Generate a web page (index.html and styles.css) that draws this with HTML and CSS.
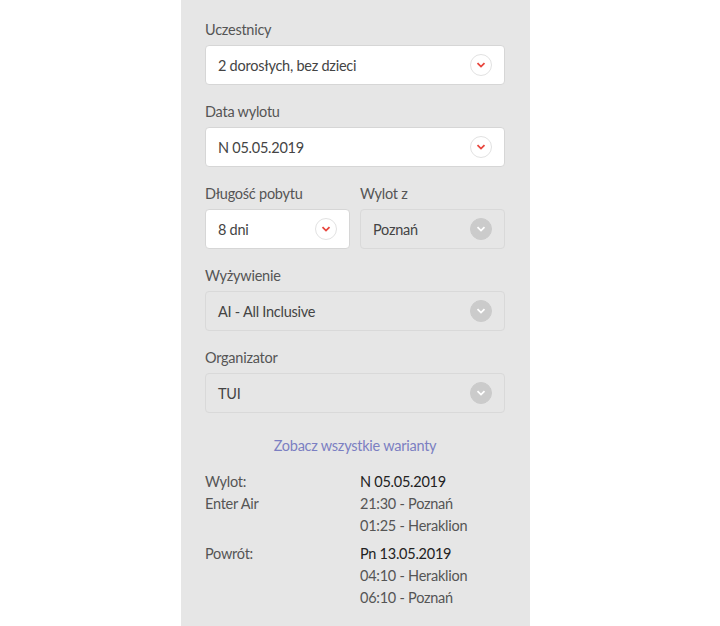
FILE: index.html
```html
<!DOCTYPE html>
<html lang="pl">
<head>
  <meta charset="UTF-8" />
  <title>Wybierz termin</title>
  <meta name="viewport" content="width=device-width, initial-scale=1.0">
  <link rel="stylesheet" href="styles.css">
</head>
<body>
  <div class="panel">
    <!-- Uczestnicy -->
    <div class="field">
      <label class="field-label">Uczestnicy</label>
      <div class="select">
        <span>2 dorosłych, bez dzieci</span>
        <span class="arrow"><svg viewBox="0 0 10 6" width="10" height="6"><path d="M1.5 1.2 L5 4.6 L8.5 1.2" /></svg></span>
      </div>
    </div>

    <div class="field">
      <label class="field-label">Data wylotu</label>
      <div class="select">
        <span>N 05.05.2019</span>
        <span class="arrow"><svg viewBox="0 0 10 6" width="10" height="6"><path d="M1.5 1.2 L5 4.6 L8.5 1.2" /></svg></span>
      </div>
    </div>

    <div class="field-row">
      <div class="field">
        <label class="field-label">Długość pobytu</label>
        <div class="select">
          <span>8 dni</span>
          <span class="arrow"><svg viewBox="0 0 10 6" width="10" height="6"><path d="M1.5 1.2 L5 4.6 L8.5 1.2" /></svg></span>
        </div>
      </div>
      <div class="field">
        <label class="field-label">Wylot z</label>
        <div class="select disabled">
          <span>Poznań</span>
          <span class="arrow"><svg viewBox="0 0 10 6" width="10" height="6"><path d="M1.5 1.2 L5 4.6 L8.5 1.2" /></svg></span>
        </div>
      </div>
    </div>

    <div class="field">
      <label class="field-label">Wyżywienie</label>
      <div class="select disabled">
        <span>AI - All Inclusive</span>
        <span class="arrow"><svg viewBox="0 0 10 6" width="10" height="6"><path d="M1.5 1.2 L5 4.6 L8.5 1.2" /></svg></span>
      </div>
    </div>

    <div class="field">
      <label class="field-label">Organizator</label>
      <div class="select disabled">
        <span>TUI</span>
        <span class="arrow"><svg viewBox="0 0 10 6" width="10" height="6"><path d="M1.5 1.2 L5 4.6 L8.5 1.2" /></svg></span>
      </div>
    </div>

    <a class="link-variants" href="#">Zobacz wszystkie warianty</a>

    <!-- Szczegóły lotu -->
    <div class="flight">
      <div class="flight-group">
        <div class="flight-left">
          <div>Wylot:</div>
          <div>Enter Air</div>
        </div>
        <div class="flight-right">
          <div class="date">N 05.05.2019</div>
          <div>21:30 - Poznań</div>
          <div>01:25 - Heraklion</div>
        </div>
      </div>
      <div class="flight-group">
        <div class="flight-left">
          <div>Powrót:</div>
        </div>
        <div class="flight-right">
          <div class="date">Pn 13.05.2019</div>
          <div>04:10 - Heraklion</div>
          <div>06:10 - Poznań</div>
        </div>
      </div>
    </div>
  </div>
</body>
</html>
```

FILE: styles.css
```css
body {
  margin: 0;
  background: #fff;
  font-family: Lato, "Open Sans", sans-serif;
  font-size: 14.5px;
  letter-spacing: -0.25px;
  color: #555;
}

.panel {
  min-height: 626px;
  box-sizing: border-box;
  width: 349px;
  margin-left: 181px;
  padding: 20px 25px 20px 24px;
  background: #e6e6e6;
}

.field {
  margin-bottom: 17px;
}

.field-label {
  display: block;
  line-height: 20px;
  margin-bottom: 5px;
  color: #555;
}

.field-row {
  display: grid;
  grid-template-columns: 1fr 1fr;
  gap: 10px;
}

.select {
  height: 40px;
  box-sizing: border-box;
  display: flex;
  align-items: center;
  justify-content: space-between;
  padding: 0 12px;
  background: #fff;
  border: 1px solid #d6d6d6;
  border-radius: 4px;
  color: #444;
}

.arrow {
  width: 22px;
  height: 22px;
  box-sizing: border-box;
  border: 1px solid #e2e2e2;
  border-radius: 50%;
  display: flex;
  align-items: center;
  justify-content: center;
}

.arrow svg path {
  fill: none;
  stroke: #e8453c;
  stroke-width: 1.8;
}

.select.disabled {
  background: #e6e6e6;
  border-color: #d9d9d9;
}

.select.disabled .arrow {
  background: #cbcbcb;
  border-color: #cbcbcb;
}

.select.disabled .arrow svg path {
  stroke: #fff;
}

.link-variants {
  display: block;
  margin-top: 23px;
  line-height: 20px;
  text-align: center;
  color: #7b7fc2;
  text-decoration: none;
}

.flight {
  margin-top: 15px;
}

.flight-group {
  display: grid;
  grid-template-columns: 155px 1fr;
  line-height: 22px;
  margin-bottom: 6px;
}

.flight-right .date {
  color: #222;
}
```
